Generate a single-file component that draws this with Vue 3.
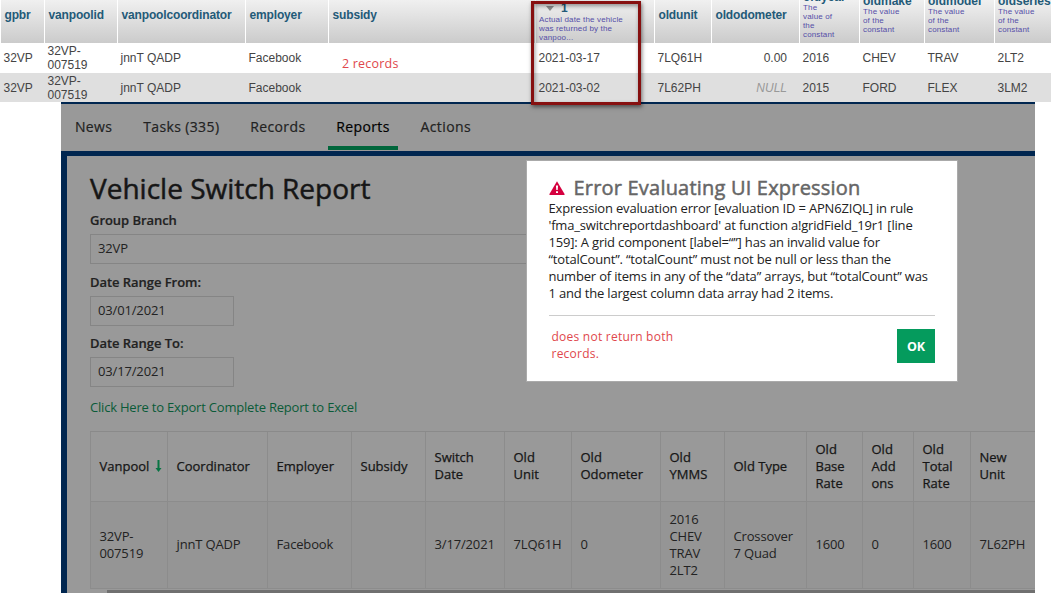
<script setup>
const constantNote = ["The value", "of the", "constant"]

const dbColumns = [
  { key: "gpbr", label: "gpbr" },
  { key: "vanpoolid", label: "vanpoolid" },
  { key: "coordinator", label: "vanpoolcoordinator" },
  { key: "employer", label: "employer" },
  { key: "subsidy", label: "subsidy" },
  { key: "date", sorted: true, note: ["Actual date the vehicle", "was returned by the", "vanpoo..."] },
  { key: "oldunit", label: "oldunit" },
  { key: "oldodometer", label: "oldodometer" },
  { key: "oldyear", label: "oldyear", note: ["The", "value of", "the", "constant"] },
  { key: "oldmake", label: "oldmake", note: constantNote },
  { key: "oldmodel", label: "oldmodel", note: constantNote },
  { key: "oldseries", label: "oldseries", note: constantNote },
]

const dbRows = [
  ["32VP", "32VP-\n007519", "jnnT QADP", "Facebook", "", "2021-03-17", "7LQ61H", "0.00", "2016", "CHEV", "TRAV", "2LT2"],
  ["32VP", "32VP-\n007519", "jnnT QADP", "Facebook", "", "2021-03-02", "7L62PH", "NULL", "2015", "FORD", "FLEX", "3LM2"],
]

const tabs = ["News", "Tasks (335)", "Records", "Reports", "Actions"]
const activeTab = "Reports"

const reportColumns = [
  "Vanpool", "Coordinator", "Employer", "Subsidy", "Switch\nDate", "Old\nUnit", "Old\nOdometer",
  "Old\nYMMS", "Old Type", "Old\nBase\nRate", "Old\nAdd\nons", "Old\nTotal\nRate", "New\nUnit",
]
const reportRow = [
  "32VP-\n007519", "jnnT QADP", "Facebook", "", "3/17/2021", "7LQ61H", "0",
  "2016\nCHEV\nTRAV\n2LT2", "Crossover\n7 Quad", "1600", "0", "1600", "7L62PH",
]

const errorLines = [
  "Expression evaluation error [evaluation ID = APN6ZIQL] in rule",
  "'fma_switchreportdashboard' at function a!gridField_19r1 [line",
  "159]: A grid component [label=“”] has an invalid value for",
  "“totalCount”. “totalCount” must not be null or less than the",
  "number of items in any of the “data” arrays, but “totalCount” was",
  "1 and the largest column data array had 2 items.",
]
</script>

<template>
  <div class="screen">
    <section class="db">
      <div class="db-row db-head">
        <div
          v-for="col in dbColumns"
          :key="col.key"
          class="db-th"
          :class="{ noted: col.note && !col.sorted, sorted: col.sorted, tall: col.key === 'oldyear' }"
        >
          <div v-if="col.sorted" class="sort-mark">
            <svg width="8" height="5" viewBox="0 0 8 5"><path d="M0 0h8L4 5z" fill="#8a8a8a" /></svg>
            <b>1</b>
          </div>
          <b v-if="col.label" class="db-label">{{ col.label }}</b>
          <p v-for="line in col.note" :key="line" class="note">{{ line }}</p>
        </div>
      </div>
      <div v-for="(row, r) in dbRows" :key="r" class="db-row db-data">
        <div v-for="(cell, c) in row" :key="c" class="db-td" :class="{ right: c === 7, null: cell === 'NULL' }">{{ cell }}</div>
      </div>
    </section>

    <main class="app">
      <nav class="tabs">
        <a v-for="tab in tabs" :key="tab" class="tab" :class="{ active: tab === activeTab }"><span>{{ tab }}</span></a>
      </nav>
      <div class="report">
        <h1>Vehicle Switch Report</h1>
        <label>Group Branch</label>
        <div class="field wide">32VP</div>
        <label>Date Range From:</label>
        <div class="field">03/01/2021</div>
        <label>Date Range To:</label>
        <div class="field">03/17/2021</div>
        <a class="export">Click Here to Export Complete Report to Excel</a>
        <div class="grid">
          <div v-for="(col, i) in reportColumns" :key="col" class="cell head">
            <span>{{ col }}</span>
            <svg v-if="i === 0" class="arrow" width="7" height="12" viewBox="0 0 7 12">
              <path d="M2.500 0h2v8H6.500L3.500 12 0.500 8h2z" fill="#087443" />
            </svg>
          </div>
          <div v-for="(cell, i) in reportRow" :key="i" class="cell body">{{ cell }}</div>
        </div>
        <div class="scroll"><div class="thumb"></div></div>
      </div>
    </main>

    <p class="remark">2 records</p>
    <div class="highlight"></div>

    <div class="dialog">
      <h2>
        <svg width="16" height="14" viewBox="0 0 16 14">
          <path d="M8 0.300 L15.700 13.300 Q15.700 14 15 14 H1 Q0.300 14 0.300 13.300 Z" fill="#d5003f" />
          <path d="M6.900 4.500h2.200l-.4 4.500H7.300zM7 10.200h2v1.900H7z" fill="#fff" />
        </svg>
        <span>Error Evaluating UI Expression</span>
      </h2>
      <div class="error-text">
        <p v-for="line in errorLines" :key="line">{{ line }}</p>
      </div>
      <footer>
        <p class="comment">does not return both<br />records.</p>
        <button>OK</button>
      </footer>
    </div>
  </div>
</template>

<style>
body {
  margin: 0;
  background: #fff;
}
</style>

<style scoped>
* {
  box-sizing: border-box;
}
p, h1, h2 {
  margin: 0;
}
.screen {
  position: relative;
  width: 1051px;
  height: 593px;
  overflow: hidden;
  font-family: "Open Sans", "Noto Sans", sans-serif;
  font-size: 13px;
  color: #222;
}

/* database result */
.db {
  height: 102px;
  font-family: "Liberation Sans", Arial, sans-serif;
  font-size: 12px;
  color: #444;
}
.db-row {
  display: grid;
  grid-template-columns: 44px 73px 128px 83px 207px 119px 57px 88px 60px 65px 70px 57px;
}
.db-head {
  height: 43px;
  background: linear-gradient(#f0f0f0, #cbcbcb);
}
.db-th {
  height: 43px;
  padding: 8px 0 0 3.5px;
  border-left: 1px solid #fff;
  color: #235a78;
  line-height: 14px;
  letter-spacing: -0.15px;
  white-space: nowrap;
  overflow: hidden;
}
.db-th.noted {
  display: flex;
  flex-direction: column;
  padding-top: 0;
  padding-left: 3px;
}
.noted .db-label {
  height: 7px;
  line-height: 14px;
  margin-top: -6px;
  margin-bottom: 6px;
  letter-spacing: 0;
}
.tall .db-label {
  margin-top: -10px;
}
.db-th.sorted {
  padding: 2px 0 0 3px;
}
.sort-mark {
  display: flex;
  align-items: center;
  gap: 7px;
  height: 12px;
  padding-left: 7px;
}
.note {
  font-size: 8px;
  line-height: 9px;
  letter-spacing: 0.15px;
  color: #554fa8;
}
.sorted .note {
  position: relative;
  top: 1px;
}
.db-data {
  height: 30px;
}
.db-data:last-child {
  height: 29px;
  background: #dfdfdf;
}
.db-td {
  display: flex;
  align-items: center;
  padding-left: 3.5px;
  line-height: 14px;
  white-space: pre;
}
.db-td.right {
  justify-content: flex-end;
  padding-right: 12px;
}
.db-td.null {
  font-style: italic;
  color: #999;
}

/* application */
.app {
  width: 974px;
  height: 491px;
  margin-left: 61px;
  border-top: 2px solid #002650;
  background: #999;
  overflow: hidden;
}
.tabs {
  display: flex;
  height: 47px;
  padding-left: 6px;
  gap: 15px;
  font-size: 14px;
  letter-spacing: 0.38px;
  -webkit-text-stroke: 0.2px;
}
.tab {
  display: flex;
  align-items: center;
  height: 46px;
  padding: 2px 7.9px 0;
  border-bottom: 4px solid transparent;
  white-space: nowrap;
}
.tab.active {
  border-color: #00663b;
  color: #000;
}
.report {
  height: 442px;
  padding: 16px 0 0 23px;
  border-top: 5px solid #002650;
  border-left: 6px solid #002650;
}
h1 {
  height: 39px;
  font-size: 28px;
  font-weight: 400;
  line-height: 32px;
  color: #161616;
  -webkit-text-stroke: 0.5px;
}
label {
  display: block;
  height: 23px;
  font-weight: 600;
  line-height: 18px;
  letter-spacing: -0.05px;
  -webkit-text-stroke: 0.2px;
}
.field {
  width: 144px;
  height: 30px;
  margin-bottom: 8px;
  padding-left: 7px;
  border: 1px solid #858585;
  line-height: 27px;
  letter-spacing: -0.15px;
}
.field.wide {
  width: 460px;
  margin-bottom: 9px;
}
.export {
  display: block;
  height: 36px;
  line-height: 24px;
  letter-spacing: -0.2px;
  color: #0a5b38;
}
.grid {
  display: grid;
  grid-template-columns: 77px 100px 84px 74px 79px 67px 89px 64px 82px 56px 51px 57px 66px;
  grid-template-rows: 70px 87px;
  width: 946px;
  border-top: 1px solid #8a8a8a;
}
.cell {
  display: flex;
  align-items: center;
  padding-left: 8.5px;
  padding-bottom: 1px;
  border-left: 1px solid #8c8c8c;
  border-bottom: 1px solid #8c8c8c;
  line-height: 17px;
  white-space: pre;
}
.head {
  color: #161616;
  -webkit-text-stroke: 0.25px;
}
.body {
  background: #959595;
  letter-spacing: -0.15px;
}
.arrow {
  margin-left: 6px;
}
.scroll {
  height: 4px;
  padding: 1px 0 0 17px;
}
.thumb {
  height: 3px;
  background: #707070;
}

/* annotations laid over the page */
.remark {
  position: absolute;
  left: 342px;
  top: 55px;
  font-size: 12.5px;
  line-height: 18px;
  letter-spacing: 0.2px;
  color: #e0474c;
}
.highlight {
  position: absolute;
  left: 531px;
  top: 1px;
  width: 110px;
  height: 104px;
  border: 3px solid #861010;
  box-shadow: 1px 2px 4px rgba(0, 0, 0, 0.5), inset 1px 2px 4px rgba(0, 0, 0, 0.4);
}

.dialog {
  position: absolute;
  left: 526px;
  top: 160px;
  width: 432px;
  height: 222px;
  padding: 15px 22px 0 21.5px;
  border: 1px solid #aaa;
  background: #fff;
}
h2 {
  display: flex;
  align-items: center;
  gap: 9px;
  height: 24px;
  font-size: 20px;
  font-weight: 400;
  line-height: 22px;
  letter-spacing: 0.2px;
  color: #666;
  white-space: nowrap;
  -webkit-text-stroke: 0.5px;
}
.error-text {
  height: 116px;
  border-bottom: 1px solid #ccc;
  line-height: 17px;
  letter-spacing: -0.18px;
  white-space: nowrap;
}
footer {
  display: flex;
  justify-content: space-between;
  padding: 12px 0 0 3px;
}
.comment {
  font-size: 12px;
  line-height: 17px;
  letter-spacing: 0.24px;
  color: #e0474c;
}
button {
  width: 38px;
  height: 34px;
  margin-top: 1px;
  padding: 0;
  border: 0;
  background: #059b5d;
  color: #fff;
  font: bold 12.5px "Open Sans", sans-serif;
}
</style>
